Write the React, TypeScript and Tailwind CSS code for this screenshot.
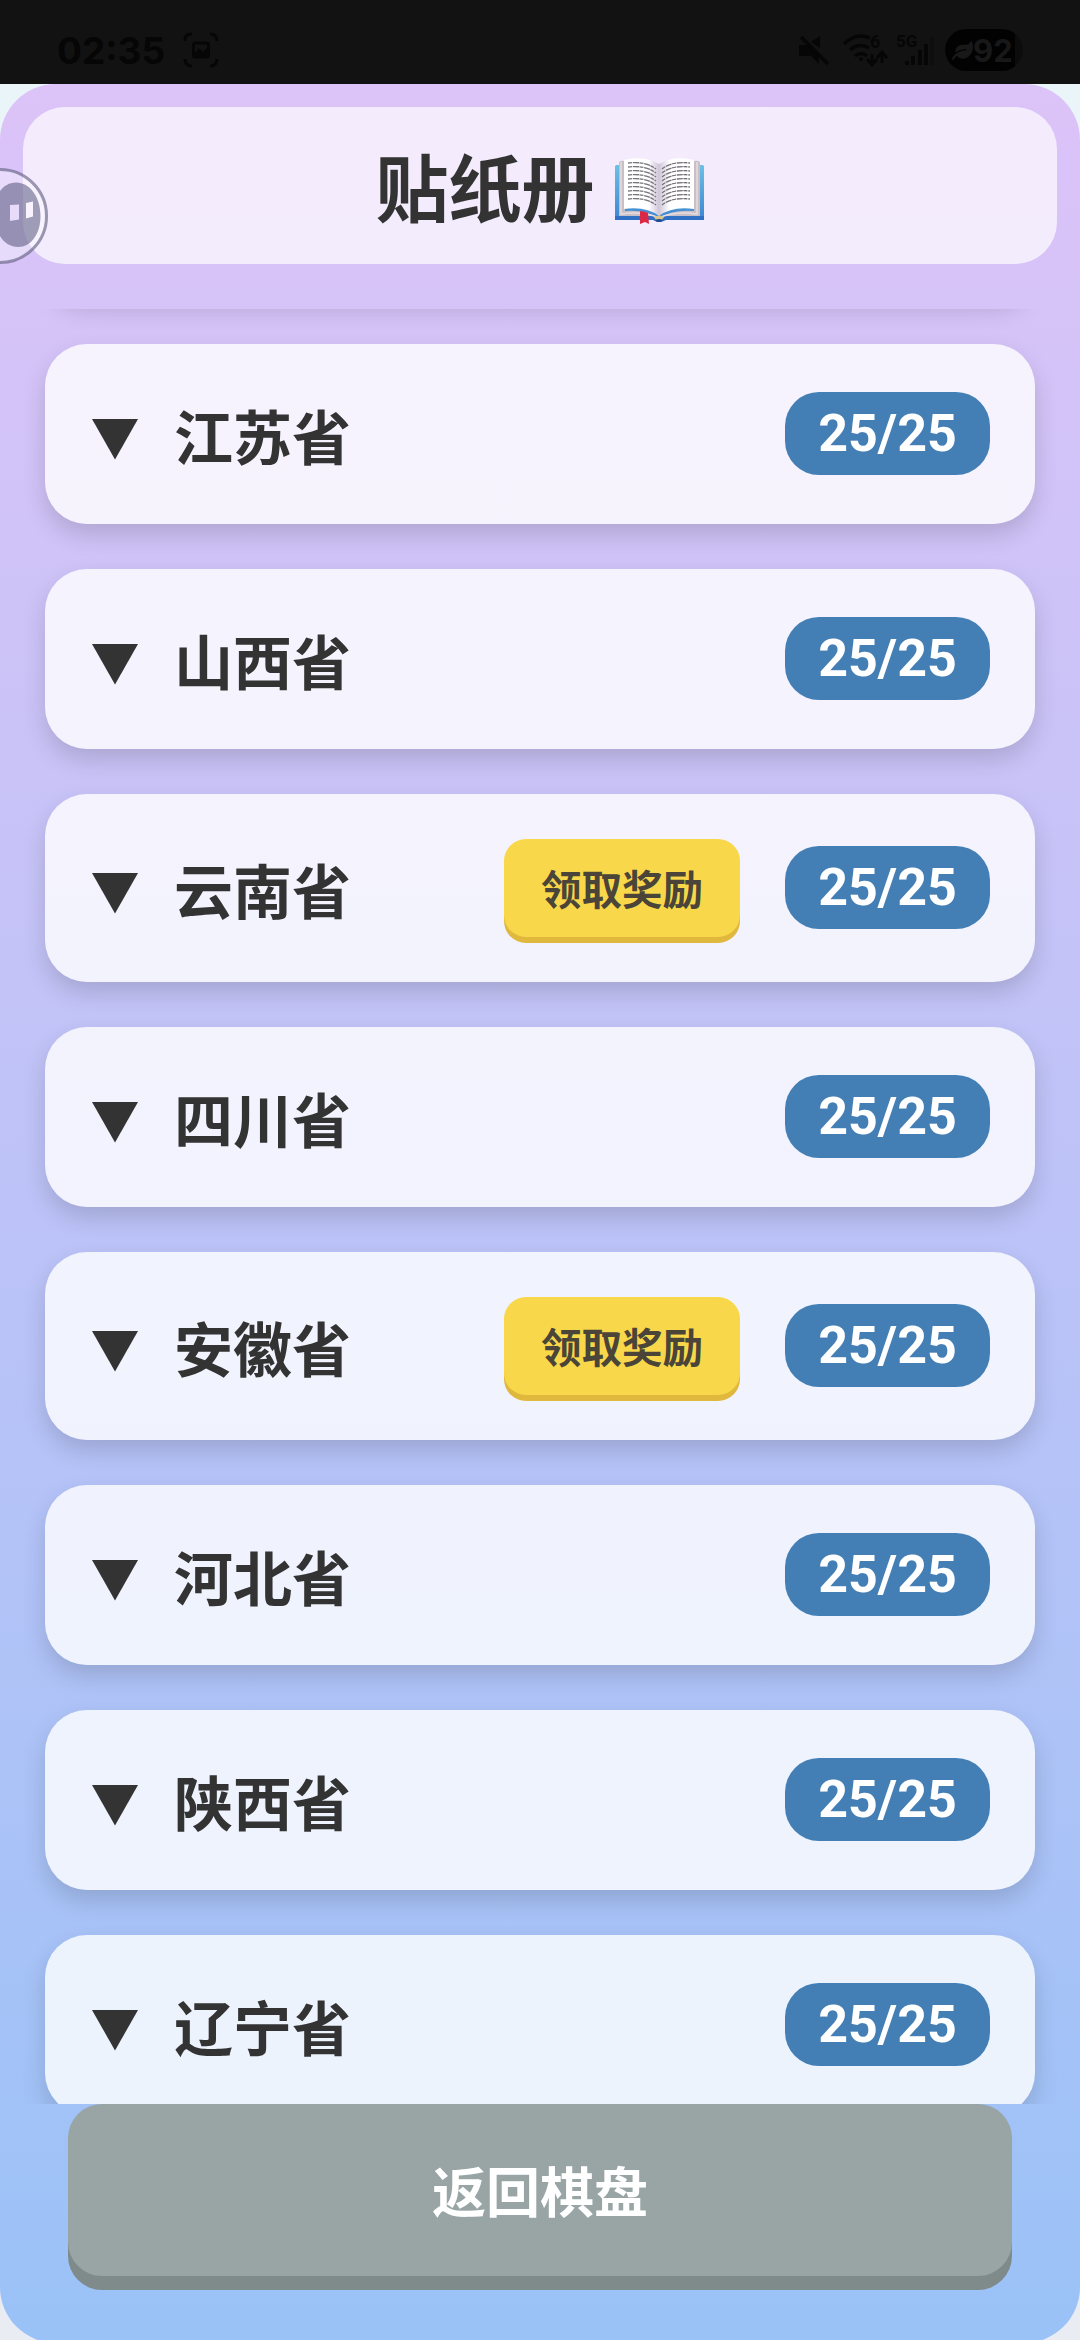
import { FaLeaf } from 'react-icons/fa'

type Province = {
  name: string
  reward?: boolean
}

const provinces: Province[] = [
  { name: '江苏省' },
  { name: '山西省' },
  { name: '云南省', reward: true },
  { name: '四川省' },
  { name: '安徽省', reward: true },
  { name: '河北省' },
  { name: '陕西省' },
  { name: '辽宁省' },
]

export default function App() {
  return (
    <main className="relative flex h-[2340px] w-[1080px] flex-col overflow-hidden bg-linear-to-b from-[#eaf5fa] to-[#e9ecf3] font-['Roboto','Noto_Sans_CJK_SC',sans-serif] text-[#333]">
      <StatusBar />

      <div className="flex h-[2259px] w-full shrink-0 flex-col rounded-[56px] bg-linear-to-b from-[#dcc3f8] to-[#9ac2f7] pt-[23px]">
        <header className="mx-[23px] flex h-[157px] shrink-0 items-center justify-center gap-[19px] rounded-[42px] bg-[#fffdff]/70">
          <h1 className="pt-3 text-[73px] leading-none font-bold">贴纸册</h1>
          <BookIcon />
        </header>

        <section className="mt-[45px] h-[1795px] shrink-0 overflow-hidden px-[45px]">
          <div className="-mt-[190px] flex flex-col gap-[45px]">
            <div className="h-[180px] shrink-0 rounded-[42px] shadow-[0_11px_23px_rgba(0,0,0,0.15)]" />
            {provinces.map((province) => (
              <ProvinceCard key={province.name} province={province} />
            ))}
          </div>
        </section>

        <button className="mx-[68px] flex h-[172px] shrink-0 items-center justify-center rounded-[34px] bg-[#99a4a5] pt-2 text-[54px] font-bold text-white shadow-[0_14px_0_#7f8a8b]">
          返回棋盘
        </button>
      </div>

      <FloatingBall />
    </main>
  )
}

type ProvinceCardProps = {
  province: Province
}

function ProvinceCard({ province }: ProvinceCardProps) {
  return (
    <div className="flex shrink-0 items-center rounded-[42px] bg-white/80 p-[45px] shadow-[0_11px_23px_rgba(0,0,0,0.15)]">
      <svg width="48" height="41" viewBox="0 0 48 41" className="mt-2.5 ml-0.5">
        <path d="M0 0H46L23 40.500Z" fill="#333" />
      </svg>
      <h2 className="ml-[34px] h-[90px] flex-1 text-[59px] leading-[102px] font-bold">
        {province.name}
      </h2>
      {province.reward && (
        <button className="mr-[45px] h-[98px] w-[236px] rounded-[22px] bg-[#f8d84a] pt-1.5 text-[40.5px] leading-none font-bold text-[#4a4538] shadow-[0_6px_0_#e0b83d]">
          领取奖励
        </button>
      )}
      <span className="mb-px flex h-[83px] w-[205px] items-center justify-center rounded-[34px] bg-[#437eb5] text-[52px] leading-none font-bold text-white">
        25/25
      </span>
    </div>
  )
}

function StatusBar() {
  return (
    <div className="flex h-[84px] shrink-0 items-center justify-between bg-[#121212] px-[57px] pt-4 text-[#060606]">
      <div className="flex items-center gap-[18px]">
        <span className="font-['Inter'] text-[37px] leading-none font-bold">
          02:35
        </span>
        <svg width="36" height="36" viewBox="0 0 36 36" fill="none" stroke="currentColor" strokeWidth="3">
          <path d="M2 9V7Q2 2 9 2M27 2Q34 2 34 9M34 27Q34 34 27 34M9 34Q2 34 2 27" />
          <rect x="10.500" y="11" width="15" height="14" rx="2" />
          <path d="M11 22L16 16L20 20L25 15V25H11z" fill="currentColor" stroke="none" />
        </svg>
      </div>
      <div className="flex items-center">
        <svg width="45" height="42" viewBox="0 0 45 42" fill="currentColor">
          <path d="M2 16h9l11 11v8l-8-8H2zM23 7v12l-9-6z" />
          <path d="M4 8L31 35" stroke="currentColor" strokeWidth="3.500" />
        </svg>
        <svg width="54" height="42" viewBox="0 0 54 42" fill="none" stroke="currentColor" strokeWidth="3.500">
          <path d="M2 15Q14 3 28 9M8 21Q17 13 27 19M13 27Q19 22 25 27" />
          <circle cx="19" cy="30" r="2" fill="currentColor" stroke="none" />
          <path d="M30 25V35M25 30L30 36L35 30M40 34V24M35 29L40 23L45 29" strokeWidth="3" />
          <text x="28" y="19" fontSize="18" fontWeight="700" fill="currentColor" stroke="none">6</text>
        </svg>
        <svg width="49" height="42" viewBox="0 0 49 42" fill="currentColor">
          <text x="0" y="18" fontSize="17" fontWeight="700">5G</text>
          <path d="M9 32h4v4H9zM15 27h4v9h-4zM22 21h4v15h-4zM28 15h4v21h-4z" />
          <path d="M34 8h4v28h-4z" fill="#0e0e0e" />
        </svg>
        <span className="flex h-[42px] w-[78px] items-center rounded-full bg-linear-to-r from-[#020202] from-90% to-[#0c0c0c] to-90% pl-[7px] text-[#181818]">
          <FaLeaf size={21} />
          <span className="font-['Inter'] text-[31px] leading-none font-bold">92</span>
        </span>
      </div>
    </div>
  )
}

const bookRows = [9, 13, 17, 21, 25, 29, 33, 37, 41, 45]

function BookIcon() {
  return (
    <svg width="91" height="70" viewBox="0 0 91 70" className="mt-3">
      <defs>
        <linearGradient id="cover" x1="0" y1="0" x2="0" y2="1">
          <stop offset="0" stopColor="#6cc0e4" />
          <stop offset="1" stopColor="#3d86d0" />
        </linearGradient>
        <linearGradient id="left" x1="0" x2="1">
          <stop offset="0.7" stopColor="#fff" />
          <stop offset="1" stopColor="#cfc6d8" />
        </linearGradient>
        <linearGradient id="right" x1="0" x2="1">
          <stop offset="0" stopColor="#cfc6d8" />
          <stop offset="0.3" stopColor="#fff" />
        </linearGradient>
      </defs>
      <rect x="1" y="8" width="89" height="55" rx="1.500" fill="url(#cover)" />
      <path d="M1 59H90V63H52Q45 67 39 63H1z" fill="#2f6fc4" />
      <path d="M5 5Q7 3 11 4V54Q30 52 45 61Q60 52 80 54V4Q84 3 86 5V59H50L45 61L40 59H5z" fill="#c9bfc6" />
      <path d="M7 5V57Q30 54 45 61Q60 54 83 57V5" fill="none" stroke="#e7dde0" strokeWidth="1.500" />
      <path d="M10 3Q30 -2 45 7V59Q32 49 10 52z" fill="url(#left)" />
      <path d="M45 7Q60 -2 80 3V52Q58 49 45 59z" fill="url(#right)" />
      <g fill="none" stroke="#77737c" strokeWidth="1.300">
        {bookRows.map((y) => (
          <path
            key={y}
            d={`M14 ${y - 3}Q32 ${y - 5} 42 ${y + 3}M48 ${y + 3}Q58 ${y - 5} 76 ${y - 3}`}
            strokeDasharray="4 0.8 6 0.6"
          />
        ))}
      </g>
      <path d="M40 60Q45 57 50 60L48 63H42z" fill="#d8c68c" />
      <path d="M41 63Q45 61 49 63L47 65H43z" fill="#1e4d94" />
      <path d="M26 54Q30 54 34 56L35 67L31 65L26 67z" fill="#dc2847" />
    </svg>
  )
}

function FloatingBall() {
  return (
    <svg width="50" height="98" viewBox="0 0 50 98" className="absolute top-[167px] left-0">
      <circle cx="0" cy="49" r="46.500" fill="#fff" fillOpacity="0.4" stroke="#5c5a7c" strokeOpacity="0.6" strokeWidth="3" />
      <path
        d="M16 15.500C30 15.500 40.500 30 40.500 49C40.500 67 31 80 18 80C11 80 4 76 0 69V24C4 19 9 15.500 16 15.500ZM10 38V54L19 52.500V37.500ZM26 36V51.500L33 49.500V34.500Z"
        fill="#454670"
        fillOpacity="0.5"
        fillRule="evenodd"
      />
    </svg>
  )
}
